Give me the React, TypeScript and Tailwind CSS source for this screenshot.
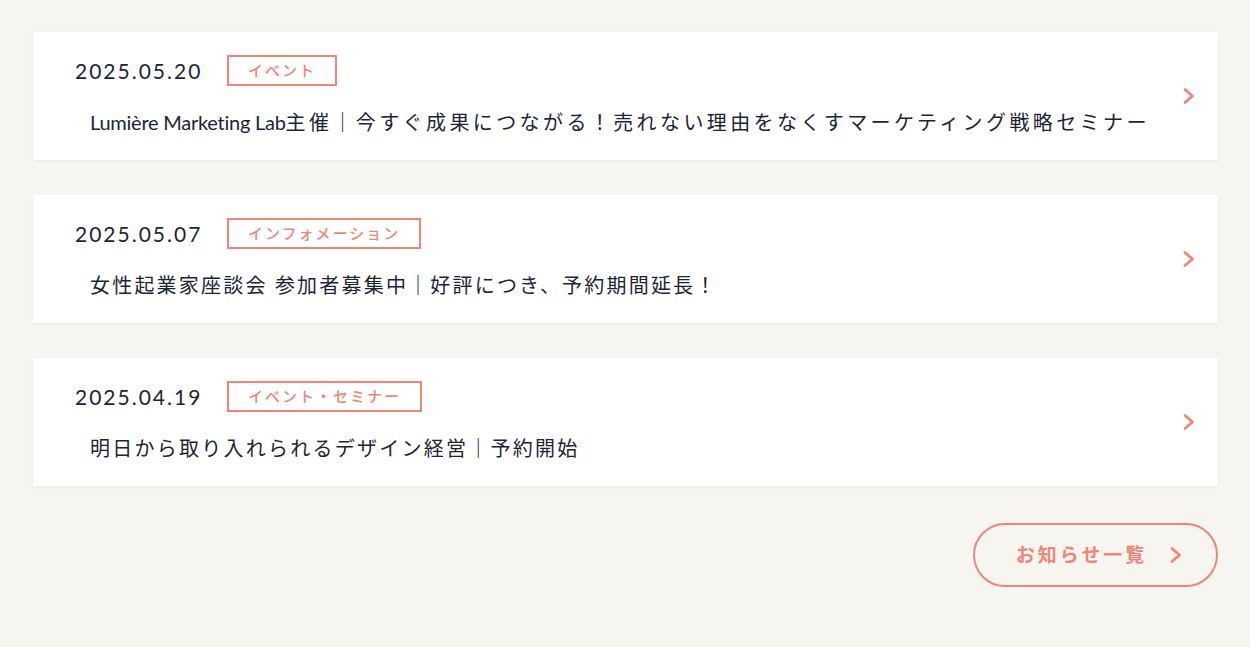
import React from "react";

const items = [
  {
    date: "2025.05.20",
    tag: "イベント",
    latin: "Lumière Marketing Lab",
    title: "主催｜今すぐ成果につながる！売れない理由をなくすマーケティング戦略セミナー",
    track: "tracking-[3.4px]",
  },
  {
    date: "2025.05.07",
    tag: "インフォメーション",
    latin: "",
    title: "女性起業家座談会 参加者募集中｜好評につき、予約期間延長！",
    track: "tracking-[2.2px]",
  },
  {
    date: "2025.04.19",
    tag: "イベント・セミナー",
    latin: "",
    title: "明日から取り入れられるデザイン経営｜予約開始",
    track: "tracking-[2.25px]",
  },
];

const Chevron = ({ className = "" }: { className?: string }) => (
  <svg viewBox="0 0 14 18" className={className} fill="none">
    <path d="M3 2.5 L10.5 9 L3 15.5" stroke="#f2857a" strokeWidth="2.8" strokeLinecap="round" strokeLinejoin="round" />
  </svg>
);

export default function App() {
  return (
    <div
      className="min-h-[647px] w-full bg-[#f7f5ef] pt-[32px] pl-[33px] pr-[32px]"
      style={{ fontFamily: 'Lato, "Noto Sans CJK JP", sans-serif' }}
    >
      <div className="flex flex-col gap-[35px]">
        {items.map((it) => (
          <a
            key={it.date}
            className="flex h-[128px] items-center bg-white pl-[42px] pr-[22px] shadow-[0_1px_3px_rgba(0,0,0,0.05)]"
          >
            <div className="flex-1">
              <div className="flex items-center">
                <span className="w-[152px] text-[21px] leading-[30px] tracking-[2px] text-[#1c2536]">
                  {it.date}
                </span>
                <span className="flex h-[31px] items-center border-2 border-[#f2857a] px-[19px] text-[15px] font-medium tracking-[2px] text-[#f2857a]">
                  {it.tag}
                </span>
              </div>
              <div className={`mt-[21px] pl-[15px] text-[20px] leading-[30px] text-[#1c2536] ${it.track}`}>
                {it.latin && <span className="tracking-[-0.25px]">{it.latin}</span>}
                {it.title}
              </div>
            </div>
            <Chevron className="h-[18px] w-[14px]" />
          </a>
        ))}
      </div>
      <div className="mt-[37px] flex justify-end">
        <a className="flex h-[64px] w-[245px] items-center justify-center gap-[22px] rounded-full border-2 border-[#f2857a] pl-[8px] text-[19px] font-bold tracking-[3px] text-[#f2857a]">
          <span>お知らせ一覧</span>
          <Chevron className="h-[18px] w-[14px]" />
        </a>
      </div>
    </div>
  );
}
